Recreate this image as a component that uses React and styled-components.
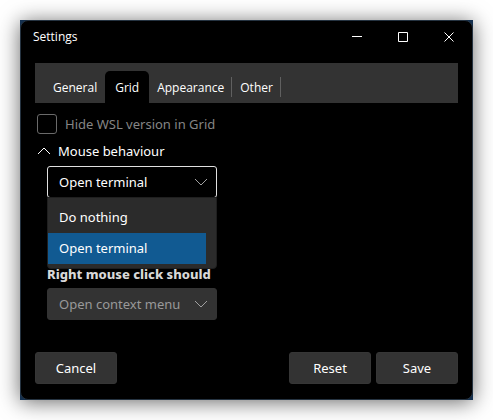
import React, { useState } from "react";
import styled, { createGlobalStyle } from "styled-components";

const GlobalStyle = createGlobalStyle`
  *, *::before, *::after { box-sizing: border-box; }
  body {
    margin: 0;
    background: #ffffff;
    color: #ffffff;
    font-family: "Noto Sans", "Open Sans", sans-serif;
    font-size: 13px;
    line-height: 20px;
  }
  button, select, input { font: inherit; color: inherit; margin: 0; }
`;

const Desktop = styled.div`
  display: flex;
  min-height: 100vh;
  padding: 20px;
`;

const Frame = styled.div`
  display: flex;
  flex: 1;
  min-width: 0;
  background: #14304f;
  box-shadow: 0 2px 20px rgba(0, 0, 0, 0.6);
`;

const Window = styled.main`
  display: flex;
  flex-direction: column;
  flex: 1;
  min-width: 0;
  border: 1px solid #253341;
  border-radius: 8px;
  background: #000000;
`;

const TitleBar = styled.header`
  display: flex;
  align-items: center;
  justify-content: space-between;
  height: 32px;
  padding-left: 12px;
`;

const Title = styled.h1`
  margin: 0;
  font-family: "Open Sans", "Noto Sans", sans-serif;
  font-size: 12px;
  font-weight: 400;
`;

const Captions = styled.div`
  display: flex;
`;

const CaptionButton = styled.button`
  display: grid;
  place-items: center;
  width: 46px;
  height: 32px;
  padding: 0;
  border: 0;
  background: transparent;
`;

const Body = styled.div`
  display: flex;
  flex-direction: column;
  flex: 1;
  padding: 10px 14px 15px;
`;

const TabBar = styled.nav`
  display: flex;
  align-items: flex-end;
  height: 40px;
  padding-left: 10px;
  background: #333333;
`;

const Tab = styled.button`
  position: relative;
  height: 32px;
  padding: 2px ${(p) => (p.$active ? 10 : 8)}px 0;
  border: 0;
  border-radius: 5px 5px 0 0;
  background: ${(p) => (p.$active ? "#000000" : "transparent")};
  font-family: "Open Sans", "Noto Sans", sans-serif;
  font-size: 12px;
  font-weight: 400;

  &::after {
    content: "";
    display: ${(p) => (p.$divided ? "block" : "none")};
    position: absolute;
    top: 6px;
    right: 0;
    width: 1px;
    height: 20px;
    background: #606060;
  }
`;

const Panel = styled.section`
  display: flex;
  flex-direction: column;
  align-items: flex-start;
  flex: 1;
  padding: 11px 0 0 2px;
`;

const CheckLabel = styled.label`
  display: flex;
  align-items: center;
  gap: 8px;
  color: #858585;
`;

const CheckBox = styled.input`
  appearance: none;
  width: 20px;
  height: 20px;
  border: 1px solid #6a6a6a;
  border-radius: 3px;
  background: #000000;
`;

const Expander = styled.button`
  display: flex;
  align-items: center;
  gap: 7px;
  margin-top: 7px;
  padding: 0;
  border: 0;
  background: transparent;
`;

const Options = styled.div`
  display: flex;
  flex-direction: column;
  gap: 4px;
  width: 170px;
  margin: 5px 0 0 10px;
`;

const Field = styled.div`
  position: relative;
  margin-bottom: ${(p) => (p.$open ? "62px" : "0")};
`;

const Select = styled.select`
  display: block;
  appearance: none;
  width: 100%;
  height: 32px;
  padding: 0 32px 0 11px;
  border: 1px solid ${(p) => (p.$open ? "#e0e0e0" : "#333333")};
  border-radius: 3px;
  background: ${(p) => (p.$open ? "#000000" : "#333333")};
  color: #ffffff;
  opacity: 1;

  &:disabled { color: #999999; }
`;

const SelectArrow = styled.span`
  display: flex;
  position: absolute;
  top: 12px;
  right: 9px;
  color: #a0a0a0;
  pointer-events: none;
`;

const Popup = styled.ul`
  position: absolute;
  z-index: 1;
  top: 31px;
  left: 0;
  width: 100%;
  margin: 0;
  padding: 4px 10px 4px 0;
  border: 1px solid #1f1f1f;
  border-radius: 0 0 4px 4px;
  background: #2b2b2b;
  list-style: none;
`;

const Option = styled.li`
  padding: 5px 11px 6px;
  background: ${(p) => (p.$selected ? "#115a92" : "transparent")};
`;

const FieldLabel = styled.label`
  color: #d8d8d8;
  font-weight: 800;
  white-space: nowrap;
`;

const Footer = styled.footer`
  display: flex;
  gap: 5px;
`;

const Button = styled.button`
  width: 82px;
  height: 32px;
  margin-right: ${(p) => (p.$leading ? "auto" : "0")};
  border: 1px solid #363636;
  border-radius: 3px;
  background: #333333;
`;

const Chevron = ({ up }) => (
  <svg width="14" height="8" viewBox="0 0 14 8" fill="none" stroke="currentColor" aria-hidden="true">
    <path d={up ? "M1 7 7 1 13 7" : "M1 1 7 7 13 1"} />
  </svg>
);

const captions = [
  ["Minimize", "M0 4.5H10"],
  ["Maximize", "M0.5 0.5H9.5V9.5H0.5Z"],
  ["Close", "M0.5 0.5 9.5 9.5M9.5 0.5 0.5 9.5"],
];

const tabs = [
  { name: "General" },
  { name: "Grid" },
  { name: "Appearance", divided: true },
  { name: "Other", divided: true },
];

const actions = ["Do nothing", "Open terminal"];

export default function App() {
  const [tab, setTab] = useState("Grid");
  const [action, setAction] = useState("Open terminal");

  return (
    <>
      <GlobalStyle />
      <Desktop>
        <Frame>
          <Window>
            <TitleBar>
              <Title>Settings</Title>
              <Captions>
                {captions.map(([name, d]) => (
                  <CaptionButton key={name} type="button" aria-label={name}>
                    <svg width="10" height="10" fill="none" stroke="currentColor">
                      <path d={d} />
                    </svg>
                  </CaptionButton>
                ))}
              </Captions>
            </TitleBar>
            <Body>
              <TabBar role="tablist">
                {tabs.map(({ name, divided }) => (
                  <Tab
                    key={name}
                    type="button"
                    role="tab"
                    aria-selected={tab === name}
                    $active={tab === name}
                    $divided={divided}
                    onClick={() => setTab(name)}
                  >
                    {name}
                  </Tab>
                ))}
              </TabBar>
              <Panel>
                <CheckLabel>
                  <CheckBox type="checkbox" disabled />
                  Hide WSL version in Grid
                </CheckLabel>
                <Expander type="button" aria-expanded="true">
                  <Chevron up />
                  Mouse behaviour
                </Expander>
                <Options>
                  <Field $open>
                    <Select
                      $open
                      aria-label="Mouse action"
                      value={action}
                      onChange={(e) => setAction(e.target.value)}
                    >
                      {actions.map((name) => (
                        <option key={name}>{name}</option>
                      ))}
                    </Select>
                    <SelectArrow><Chevron /></SelectArrow>
                    <Popup role="listbox">
                      {actions.map((name) => (
                        <Option
                          key={name}
                          role="option"
                          aria-selected={action === name}
                          $selected={action === name}
                          onClick={() => setAction(name)}
                        >
                          {name}
                        </Option>
                      ))}
                    </Popup>
                  </Field>
                  <FieldLabel htmlFor="right-click">Right mouse click should</FieldLabel>
                  <Field>
                    <Select id="right-click" disabled>
                      <option>Open context menu</option>
                    </Select>
                    <SelectArrow><Chevron /></SelectArrow>
                  </Field>
                </Options>
              </Panel>
              <Footer>
                <Button type="button" $leading>Cancel</Button>
                <Button type="button">Reset</Button>
                <Button type="button">Save</Button>
              </Footer>
            </Body>
          </Window>
        </Frame>
      </Desktop>
    </>
  );
}
